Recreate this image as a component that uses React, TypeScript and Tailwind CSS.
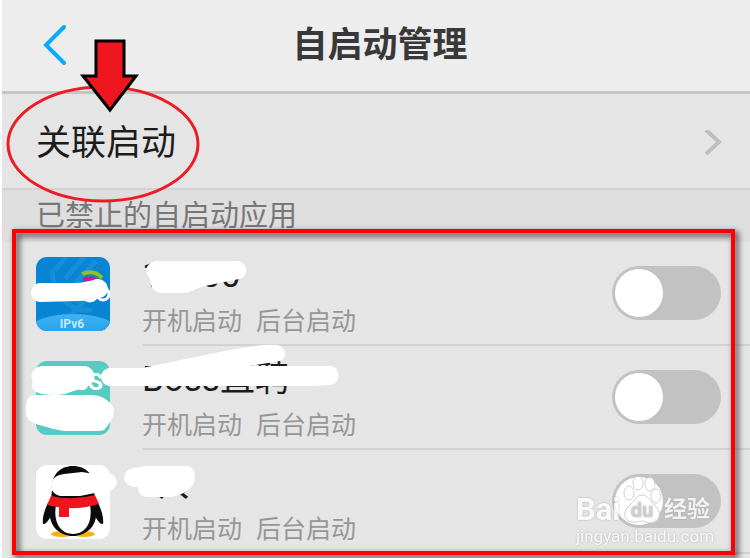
import { useState } from 'react';

type AppItem = {
  id: string;
  nombre: string;
  icono: () => React.ReactNode;
};

const FONT = 'font-["Roboto","Noto_Sans_CJK_SC",sans-serif]';

function IconoTelecom() {
  return (
    <svg viewBox="0 0 74 74" className="size-[74px] shrink-0" aria-hidden="true">
      <defs>
        <clipPath id="telecom-clip">
          <rect width="74" height="74" rx="11" />
        </clipPath>
        <linearGradient id="telecom-base" x1="0" y1="0" x2="0" y2="1">
          <stop offset="0" stopColor="#3db2f3" />
          <stop offset="1" stopColor="#1597e3" />
        </linearGradient>
      </defs>
      <g clipPath="url(#telecom-clip)">
        <rect width="74" height="74" fill="#0785d3" />
        <g fill="none" stroke="#2a98db" strokeWidth="5" opacity="0.5">
          <path d="M19 13L30 0" />
          <path d="M29 22L48 0" />
          <path d="M16 13C17 38 34 56 56 53" />
          <path d="M25 26C28 39 40 46 52 43" />
          <path d="M39 26L60 4" />
          <path d="M32 61L52 40" />
        </g>
        <path d="M46 17Q58 12 66 21" fill="none" stroke="#8fc31f" strokeWidth="4" />
        <path d="M48 23Q56 19 63 26" fill="none" stroke="#d4148c" strokeWidth="4" />
        <circle cx="54" cy="37" r="7" fill="none" stroke="#fff" strokeWidth="3" />
        <circle cx="67" cy="37" r="6" fill="none" stroke="#fff" strokeWidth="3" />
        <ellipse cx="37" cy="73" rx="44" ry="16" fill="url(#telecom-base)" />
        <text x="36" y="71" textAnchor="middle" fontSize="12" fontWeight="bold" fill="#c3e8ff" fontFamily="Roboto, sans-serif">
          IPv6
        </text>
      </g>
    </svg>
  );
}

function IconoBoss() {
  return (
    <svg viewBox="0 0 74 74" className="size-[74px] shrink-0" aria-hidden="true">
      <rect width="74" height="74" rx="11" fill="#55cbc4" />
      <text x="67" y="29" textAnchor="end" fontSize="24" fontWeight="bold" fill="#fff" fontFamily="Roboto, sans-serif">
        BOSS
      </text>
    </svg>
  );
}

function IconoQQ() {
  return (
    <svg viewBox="0 0 74 74" className="size-[74px] shrink-0" aria-hidden="true">
      <rect width="74" height="74" rx="11" fill="#fff" />
      <ellipse cx="26" cy="69" rx="11" ry="3" fill="#fbb116" />
      <ellipse cx="48" cy="69" rx="11" ry="3" fill="#fbb116" />
      <path d="M12 38C9 44 6 52 7 59C10 60 13 54 16 50H58C61 54 64 60 67 59C68 52 65 44 62 38Z" fill="#0a0a0a" />
      <path d="M37 1C23 1 15 11 16 25L14 45C12 60 23 71 37 71C51 71 62 60 60 45L58 25C59 11 51 1 37 1Z" fill="#0a0a0a" />
      <path d="M20 40C17 57 24 69 37 69C50 69 57 57 54 40Z" fill="#fff" />
      <path d="M15 31Q37 36 59 30L63 39Q37 47 11 40Z" fill="#ec161c" />
      <path d="M23 40H33V52H23Z" fill="#ec161c" />
    </svg>
  );
}

const APPS: AppItem[] = [
  { id: 'telecom', nombre: '10000', icono: IconoTelecom },
  { id: 'boss', nombre: 'Boss直聘', icono: IconoBoss },
  { id: 'qq', nombre: 'QQ', icono: IconoQQ },
];

function AppRow({ app, activo, onToggle }: { app: AppItem; activo: boolean; onToggle: (id: string) => void }) {
  const Icono = app.icono;
  return (
    <li className="flex h-[104px] gap-8 pl-[34px]">
      <div className="pt-[15px]">
        <Icono />
      </div>
      <div className="flex flex-1 items-start justify-between border-b-2 border-[#d3d3d3] pr-[29px]">
        <label htmlFor={app.id} className="pt-3.5">
          <span className="block text-[35px] leading-10 text-[#1c1c1c]">{app.nombre}</span>
          <span className="mt-1.5 flex gap-3.5 text-[25px] leading-10 text-[#969696]">
            <span>开机启动</span>
            <span>后台启动</span>
          </span>
        </label>
        <input
          id={app.id}
          type="checkbox"
          role="switch"
          checked={activo}
          onChange={() => onToggle(app.id)}
          className="mt-6 h-[54px] w-[109px] shrink-0 cursor-pointer appearance-none rounded-full bg-[#c2c2c2] p-[3px] before:block before:size-12 before:rounded-full before:bg-white checked:bg-[#00a8ff] checked:before:ml-auto"
        />
      </div>
    </li>
  );
}

// Hand drawn marks: brush strokes over the names, the arrow and the circle
function Marcas() {
  return (
    <svg viewBox="0 0 360 558" className="pointer-events-none absolute top-0 left-0 h-[558px] w-[360px]" aria-hidden="true">
      <g fill="#fff">
        <path d="M40 283L76 283Q88 282 96 279C108 278 112 292 103 297Q90 301 78 301L40 302C28 301 28 284 40 283Z" />
        <path d="M156 261H237C249 262 249 277 239 279L205 286C195 288 192 293 183 293H160C151 291 150 282 150 278C145 274 144 263 156 261Z" />
        <path d="M42 366H84C96 367 98 382 88 386L65 394Q55 396 42 394C32 392 30 385 33 382C29 375 33 367 42 366Z" />
        <path d="M36 395H94C104 396 112 403 114 409C114 418 109 424 104 430Q101 431 94 431H64Q52 429 43 426L36 424Q26 421 26 412V405Q27 395 36 395Z" />
        <path d="M110 368H142L230 350Q262 344 276 345C287 346 288 358 280 361L250 366H330C341 367 341 383 331 385L310 386H110C98 385 98 369 110 368Z" />
        <path d="M52 482Q54 475 64 474L82 472L94 474L108 473C120 476 120 489 107 492L95 493L80 496H60C52 494 50 488 52 482Z" />
        <path d="M134 468L146 466H187C195 467 196 475 194 483Q188 494 172 497H146Q138 496 138 487H134C121 485 121 470 134 468Z" />
      </g>
      <ellipse cx="103" cy="144" rx="95" ry="57" fill="none" stroke="#ed1c24" strokeWidth="3" />
      <path d="M96 41H124V76H136L110 110L83 76H96Z" fill="#ee161f" stroke="#000" strokeWidth="3" />
    </svg>
  );
}

function MarcaAgua() {
  return (
    <div className="pointer-events-none absolute right-10 bottom-2 w-[134px] text-white opacity-80 [text-shadow:0_0_2px_#999]">
      <div className="flex h-12 items-end justify-between">
        <span className="text-[31px] leading-8 font-bold">Bai</span>
        <svg viewBox="0 0 40 52" className="h-[52px] w-10 shrink-0" aria-hidden="true">
          <g fill="#fff" stroke="#c4c4c4" strokeWidth="1">
            <path d="M20 21C26 21 29 28 34 33C41 39 37 49 29 49C25 49 23 47 20 47C17 47 13 49 9 48C1 46 1 37 7 32C12 28 14 21 20 21Z" />
            <ellipse cx="7" cy="19" rx="5" ry="7" />
            <ellipse cx="16" cy="9" rx="5" ry="7" />
            <ellipse cx="28" cy="10" rx="5" ry="7" />
            <ellipse cx="34" cy="22" rx="5" ry="7" />
          </g>
          <text x="20" y="43" textAnchor="middle" fontSize="20" fontWeight="bold" fill="#c4c4c4" fontFamily="Roboto, sans-serif">
            du
          </text>
        </svg>
        <span className="text-[23px] leading-8 font-bold whitespace-nowrap">经验</span>
      </div>
      <div className="text-[17px] leading-5">jingyan.baidu.com</div>
    </div>
  );
}

export default function App() {
  const [activos, setActivos] = useState<string[]>([]);

  function handleToggle(id: string) {
    setActivos(prev => (prev.includes(id) ? prev.filter(a => a !== id) : [...prev, id]));
  }

  return (
    <div className="min-h-screen bg-white pl-0.5">
      <div className={`relative min-h-screen bg-[#e5e5e5] ${FONT}`}>
        {/* Header */}
        <header className="grid h-[94px] grid-cols-[80px_1fr_80px] items-center border-b-3 border-[#c4c4c4] bg-[#ededed]">
          <button type="button" aria-label="返回" className="pl-10">
            <svg viewBox="0 0 24 42" className="h-[42px] w-6" fill="none" stroke="#0aabff" strokeWidth="4" strokeLinecap="round" aria-hidden="true">
              <path d="M22 2L4 20L22 38" />
            </svg>
          </button>
          <h1 className="pl-2 text-center text-[35px] leading-10 font-bold text-[#383838]">自启动管理</h1>
        </header>

        <a href="#guanlian" className="flex h-24 items-center justify-between border-b-2 border-[#d2d2d2] pt-1.5 pr-7 pl-[34px] text-[35px] text-[#1c1c1c]">
          关联启动
          <svg viewBox="0 0 18 28" className="h-7 w-[18px]" fill="none" stroke="#bebebe" strokeWidth="4" aria-hidden="true">
            <path d="M2 0L15 12L2 24" />
          </svg>
        </a>

        <h2 className="h-[52px] bg-[#dedede] pl-[34px] text-[29px] leading-[52px] text-[#777]">已禁止的自启动应用</h2>

        <section className="relative">
          <ul>
            {APPS.map(app => (
              <AppRow key={app.id} app={app} activo={activos.includes(app.id)} onToggle={handleToggle} />
            ))}
          </ul>
          <MarcaAgua />
          <div className="pointer-events-none absolute -top-[13px] right-[15px] -bottom-px left-2.5 border-4 border-[#fe0000] drop-shadow-[3px_3px_3px_rgba(0,0,0,0.8)]" />
        </section>
      </div>
      <Marcas />
    </div>
  );
}
